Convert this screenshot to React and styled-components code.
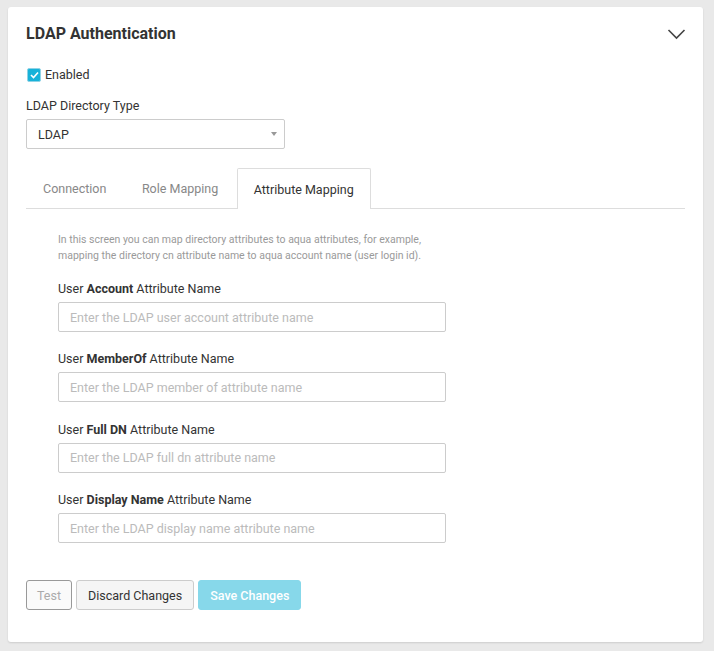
import React from 'react'
import styled, { createGlobalStyle } from 'styled-components'

const Global = createGlobalStyle`
  body {
    margin: 0;
    background: #e9e9e9;
    font-family: Roboto, "Liberation Sans", sans-serif;
    color: #333;
  }
`

const Page = styled.div`
  padding: 7px 11px 9px 8px;
`

const Card = styled.div`
  background: #fff;
  border-radius: 3px;
  box-shadow: 0 1px 2px rgba(0,0,0,0.12);
  padding: 18px 18px 32px 18px;
  height: 635px;
  box-sizing: border-box;
`

const Header = styled.div`
  display: flex;
  justify-content: space-between;
  align-items: center;
  height: 17px;
`

const Title = styled.h2`
  margin: 0;
  font-size: 16px;
  font-weight: 700;
  color: #333;
`

const Chevron = styled.svg`
  width: 19px;
  height: 12px;
  margin-right: -1px;
`

const CheckRow = styled.label`
  display: flex;
  align-items: center;
  gap: 4px;
  margin-top: 25px;
  margin-left: 1px;
  font-size: 12.5px;
  color: #333;
`

const Box = styled.span`
  width: 12px;
  height: 12px;
  border-radius: 2px;
  background: #17b2d9;
  border: 1px solid #8fd3e6;
  display: flex;
  align-items: center;
  justify-content: center;
`

const Label = styled.div`
  font-size: 12.5px;
  color: #333;
  margin-top: ${p => p.top || 0}px;
  margin-bottom: ${p => p.gap || 6}px;
  b { font-weight: 700; }
`

const Select = styled.div`
  width: 259px;
  height: 30px;
  box-sizing: border-box;
  border: 1px solid #ccc;
  border-radius: 2px;
  display: flex;
  align-items: center;
  justify-content: space-between;
  padding: 0 7px 0 11px;
  font-size: 12.5px;
  color: #333;
`

const Caret = styled.span`
  width: 0;
  height: 0;
  border-left: 3px solid transparent;
  border-right: 3px solid transparent;
  border-top: 4px solid #999;
`

const Tabs = styled.div`
  display: flex;
  gap: 1.5px;
  margin-top: 19px;
  border-bottom: 1px solid #ddd;
`

const Tab = styled.div`
  height: 40px;
  box-sizing: border-box;
  display: flex;
  align-items: center;
  padding: 0 16px;
  font-size: 12.5px;
  color: ${p => p.active ? '#333' : '#888'};
  border: 1px solid ${p => p.active ? '#ddd' : 'transparent'};
  border-bottom: none;
  border-radius: 2px 2px 0 0;
  background: #fff;
  margin-bottom: -1px;
  ${p => p.active && 'height: 41px;'}
`

const Pane = styled.div`
  padding: 23px 0 0 32px;
  width: 388px;
`

const Hint = styled.p`
  margin: 0 0 17px 0;
  font-size: 10.5px;
  line-height: 16px;
  color: #9a9a9a;
`

const Field = styled.div`
  margin-bottom: 19.4px;
`

const Input = styled.input`
  width: 388px;
  height: 30px;
  box-sizing: border-box;
  border: 1px solid #ccc;
  border-radius: 2px;
  padding: 0 11px;
  font-family: inherit;
  font-size: 12.5px;
  outline: none;
  &::placeholder { color: #bbb; }
`

const Buttons = styled.div`
  display: flex;
  gap: 4px;
  margin-top: 37px;
`

const Button = styled.button`
  height: 30px;
  box-sizing: border-box;
  border-radius: 3px;
  font-family: inherit;
  font-size: 12.5px;
  padding: 0 ${p => p.pad || 11}px;
  border: 1px solid ${p => p.border};
  background: ${p => p.bg};
  color: ${p => p.color};
  font-weight: ${p => p.bold ? 500 : 400};
`

const fields = [
  ['Account', 'Enter the LDAP user account attribute name'],
  ['MemberOf', 'Enter the LDAP member of attribute name'],
  ['Full DN', 'Enter the LDAP full dn attribute name'],
  ['Display Name', 'Enter the LDAP display name attribute name'],
]

export default function App() {
  return (
    <Page>
      <Global />
      <Card>
        <Header>
          <Title>LDAP Authentication</Title>
          <Chevron viewBox="0 0 19 12">
            <path d="M1.5 2 L9.5 10 L17.5 2" fill="none" stroke="#444" strokeWidth="1.6" />
          </Chevron>
        </Header>
        <CheckRow>
          <Box>
            <svg width="9" height="8" viewBox="0 0 9 8">
              <path d="M1 4 L3.5 6.5 L8 1.5" fill="none" stroke="#fff" strokeWidth="1.6" />
            </svg>
          </Box>
          Enabled
        </CheckRow>
        <Label top={16} gap={6}>LDAP Directory Type</Label>
        <Select>
          LDAP
          <Caret />
        </Select>
        <Tabs>
          <Tab>Connection</Tab>
          <Tab>Role Mapping</Tab>
          <Tab active>Attribute Mapping</Tab>
        </Tabs>
        <Pane>
          <Hint>
            In this screen you can map directory attributes to aqua attributes, for example,
            mapping the directory cn attribute name to aqua account name (user login id).
          </Hint>
          {fields.map(([name, ph]) => (
            <Field key={name}>
              <Label>User <b>{name}</b> Attribute Name</Label>
              <Input placeholder={ph} />
            </Field>
          ))}
        </Pane>
        <Buttons>
          <Button border="#999" bg="#fafafa" color="#aaa" pad={10}>Test</Button>
          <Button border="#ccc" bg="#f5f5f5" color="#333" pad={11}>Discard Changes</Button>
          <Button border="#87d8ea" bg="#87d8ea" color="#fff" bold pad={11}>Save Changes</Button>
        </Buttons>
      </Card>
    </Page>
  )
}
